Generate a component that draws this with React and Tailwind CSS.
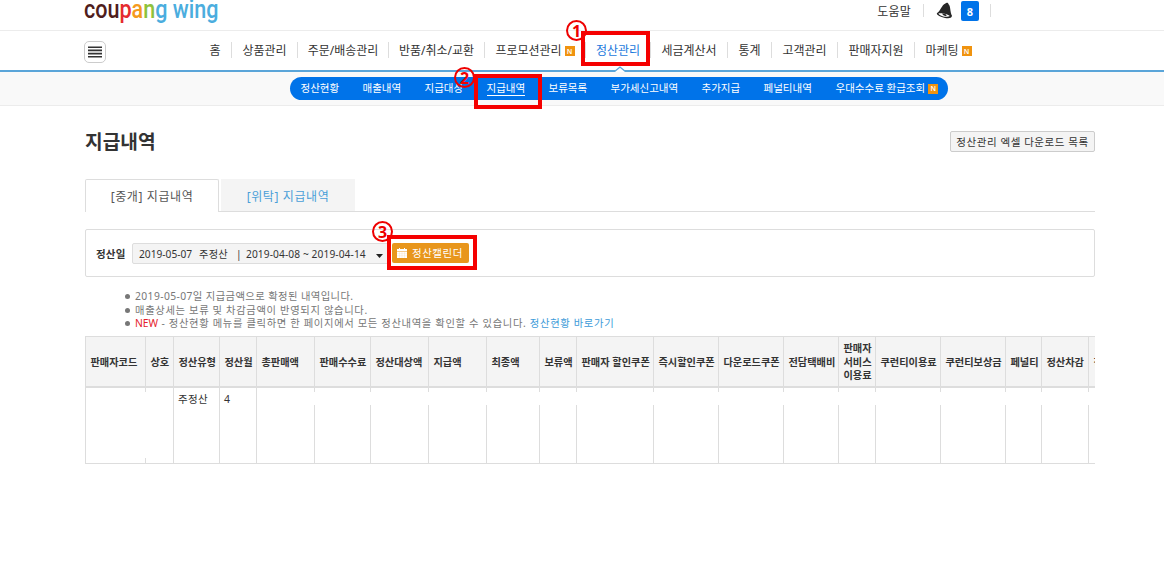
const FONT = "font-['Noto_Sans','Noto_Sans_CJK_KR',sans-serif]"

const menu = [
  { label: '홈', w: 'w-[33px]' },
  { label: '상품관리', w: 'w-[66px]' },
  { label: '주문/배송관리', w: 'w-[91px]' },
  { label: '반품/취소/교환', w: 'w-[96px]' },
  { label: '프로모션관리', w: 'w-[101px]', isNew: true },
  { label: '정산관리', w: 'w-[65px]', active: true },
  { label: '세금계산서', w: 'w-[77px]' },
  { label: '통계', w: 'w-[44px]' },
  { label: '고객관리', w: 'w-[66px]' },
  { label: '판매자지원', w: 'w-[77px]' },
  { label: '마케팅', w: 'w-[67px]', isNew: true, last: true },
]

const subMenu = [
  { label: '정산현황', w: 'w-[62px]' },
  { label: '매출내역', w: 'w-[62px]' },
  { label: '지급대상', w: 'w-[62px]' },
  { label: '지급내역', w: 'w-[62px]', active: true },
  { label: '보류목록', w: 'w-[62px]' },
  { label: '부가세신고내역', w: 'w-[91px]' },
  { label: '추가지급', w: 'w-[62px]' },
  { label: '페널티내역', w: 'w-[72px]' },
  { label: '우대수수료 환급조회', w: 'w-[110px]', isNew: true },
]

// line: 'full' = unbroken divider, 'cut' = gap near the top, 'tall' = only the ends are left
const columns = [
  { label: '판매자코드', w: 'w-[60px]', line: 'tall' },
  { label: '상호', w: 'w-[28px]', line: 'full' },
  { label: '정산유형', w: 'w-[46px]', line: 'full', value: '주정산' },
  { label: '정산월', w: 'w-[37px]', line: 'full', value: '4' },
  { label: '총판매액', w: 'w-[58px]', line: 'cut' },
  { label: '판매수수료', w: 'w-[56px]', line: 'cut' },
  { label: '정산대상액', w: 'w-[58px]', line: 'cut' },
  { label: '지급액', w: 'w-[58px]', line: 'cut' },
  { label: '최종액', w: 'w-[53px]', line: 'cut' },
  { label: '보류액', w: 'w-[37px]', line: 'cut' },
  { label: '판매자 할인쿠폰', w: 'w-[77px]', line: 'cut' },
  { label: '즉시할인쿠폰', w: 'w-[65px]', line: 'cut' },
  { label: '다운로드쿠폰', w: 'w-[65px]', line: 'cut' },
  { label: '전담택배비', w: 'w-[55px]', line: 'cut' },
  { label: '판매자\n서비스\n이용료', w: 'w-[37px]', line: 'cut' },
  { label: '쿠런티이용료', w: 'w-[65px]', line: 'cut' },
  { label: '쿠런티보상금', w: 'w-[65px]', line: 'cut' },
  { label: '페널티', w: 'w-[36px]', line: 'cut' },
  { label: '정산차감', w: 'w-[47px]', line: 'cut' },
  { label: '정산', w: 'w-[40px]', line: 'cut' },
]

function NewBadge() {
  return (
    <span className="flex h-[10px] w-[10px] shrink-0 items-center justify-center bg-[#f0930f] text-[7px] leading-none font-semibold text-white">
      N
    </span>
  )
}

function Logo() {
  return (
    <svg className="block h-[30px] w-[140px]" viewBox="0 0 140 30">
      <text
        x="0"
        y="17.8"
        textLength="134.5"
        lengthAdjust="spacingAndGlyphs"
        fontFamily="Roboto, sans-serif"
        fontSize="25"
        fontWeight="500"
      >
        <tspan fill="#4f1d1c">cou</tspan>
        <tspan fill="#e52b2f">p</tspan>
        <tspan fill="#f59a1d">a</tspan>
        <tspan fill="#8fc23c">n</tspan>
        <tspan fill="#4badde">g wing</tspan>
      </text>
    </svg>
  )
}

function Bell() {
  return (
    <svg className="h-[17px] w-[17px]" viewBox="0 0 17 17">
      <path
        d="M9.4 1.4 C10.3 .2 12.3 .5 12.4 2 C14.8 4 13.8 9.5 16 13.8 C15.6 16.4 12.4 16.6 9 15.9 C4.5 15 .8 13.1 .8 11.2 C4.8 8.7 5.5 3 9.4 1.4Z"
        fill="#262626"
      />
      <path d="M2.4 11.4 C5 10.5 12 12 13.8 14.1 C11.5 15.9 4.2 14.2 2.4 11.4Z" fill="#fff" />
      <path d="M6.2 11.5 C9 11.4 10.8 12.5 10.6 13.7 C9.4 14.6 6.6 13.6 6.2 11.5Z" fill="#262626" />
    </svg>
  )
}

function Header() {
  return (
    <header className="h-[31px] border-b border-[#ececec]">
      <div className="ml-[84px] flex w-[1010px] items-start">
        <Logo />
        <div className="mr-[103px] ml-auto flex h-[21px] items-center text-[12px] leading-[14px] text-[#333]">
          <span className="mt-[2px] tracking-[0.2px]">도움말</span>
          <span className="ml-[12px] h-[13px] w-px bg-[#ddd]" />
          <span className="ml-[12px]"><Bell /></span>
          <span className="ml-[8px] flex h-[20px] w-[18px] items-center justify-center rounded-[2px] bg-[#0073e9] pt-[3px] text-[11px] font-bold text-white">
            8
          </span>
          <span className="ml-[11px] h-[13px] w-px bg-[#ddd]" />
        </div>
      </div>
    </header>
  )
}

function MainMenu() {
  return (
    <nav className="flex h-[39px] pl-[84px] text-[12px] text-[#333]">
      <button type="button" className="mt-[10px] flex h-[22px] w-[22px] items-center justify-center rounded-[5px] border border-[#ccc]">
        <svg className="h-[12px] w-[14px]" viewBox="0 0 14 12">
          <path d="M0 1.2H14M0 4.4H14M0 7.6H14M0 10.8H14" stroke="#333" strokeWidth="1.6" />
        </svg>
      </button>
      <ul className="mt-[11px] ml-[93px] flex h-[16px]">
        {menu.map((item) => (
          <li
            key={item.label}
            className={`flex items-center justify-center gap-[3px] pt-[2px] leading-[16px] whitespace-nowrap ${item.w} ${item.last ? '' : 'border-r border-[#ddd]'} ${item.active ? 'text-[#1a78dc]' : ''}`}
          >
            {item.label}
            {item.isNew && <NewBadge />}
          </li>
        ))}
      </ul>
    </nav>
  )
}

function SubMenu() {
  return (
    <div className="relative h-[36px] border-t-2 border-b border-t-[#5aa5d9] border-b-[#ececec] bg-[#f9f9f9]">
      <svg className="absolute -top-[6px] left-[613px] h-[6px] w-[14px]" viewBox="0 0 14 6">
        <path d="M1 6 L7 1 L13 6" fill="#fff" stroke="#5aa5d9" strokeWidth="1.3" />
      </svg>
      <ul className="mt-[5px] ml-[290px] flex h-[23px] w-[658px] items-center rounded-full bg-[#0073e9] pl-[10.5px] text-[10.5px] text-white">
        {subMenu.map((item) => (
          <li key={item.label} className={`flex shrink-0 items-center gap-[3px] leading-[13px] whitespace-nowrap ${item.w}`}>
            <span className={item.active ? 'border-b border-white' : ''}>{item.label}</span>
            {item.isNew && <NewBadge />}
          </li>
        ))}
      </ul>
    </div>
  )
}

function SearchBar() {
  return (
    <div className="mt-[17px] flex h-[48px] items-center rounded-[2px] border border-[#ddd] pl-[10px] text-[10.5px]">
      <b className="w-[36px] pt-[4px] tracking-[0.2px] text-[#333]">정산일</b>
      <div className="flex h-[21px] w-[257px] items-center rounded-[2px] border border-[#ddd] bg-[#f4f4f4] pl-[6px] text-[10.2px] whitespace-pre text-[#333]">
        <span className="w-[60px] pt-[4px]">2019-05-07</span>
        <span className="w-[37px] pt-[4px] tracking-[0.3px]">주정산</span>
        <span className="w-[10px] pt-[3px]">|</span>
        <span className="w-[130px] pt-[4px] tracking-[0.1px]">2019-04-08 ~ 2019-04-14</span>
        <svg className="mt-[5px] h-[4px] w-[7px]" viewBox="0 0 7 4">
          <path d="M0 0H7L3.5 4Z" fill="#222" />
        </svg>
      </div>
      <button type="button" className="ml-[3px] flex h-[20px] w-[77px] items-center gap-[5px] rounded-[2px] bg-[#e8961c] pl-[5px] tracking-[0.5px] text-white">
        <svg className="h-[10px] w-[10px] shrink-0" viewBox="0 0 10 10">
          <path d="M0 1H2V0H3V1H7V0H8V1H10V3H0Z M0 3.5H10V10H0Z" fill="#fff" />
          <path d="M0 5.7H10M0 7.8H10M2.5 4V10M5 4V10M7.5 4V10" stroke="#e8961c" strokeWidth=".12" />
        </svg>
        <span className="pt-[2px] whitespace-nowrap">정산캘린더</span>
      </button>
    </div>
  )
}

function Notes() {
  return (
    <ul className="mt-[13px] ml-[40px] text-[10.3px] leading-[13.5px] tracking-[0.66px] text-[#777]">
      <li className="flex items-center gap-[5px]">
        <span className="h-[5px] w-[5px] rounded-full bg-[#777]" />
        <span className="tracking-[0.41px]">2019-05-07일 지급금액으로 확정된 내역입니다.</span>
      </li>
      <li className="flex items-center gap-[5px]">
        <span className="h-[5px] w-[5px] rounded-full bg-[#777]" />
        <span>매출상세는 보류 및 차감금액이 반영되지 않습니다.</span>
      </li>
      <li className="flex items-center gap-[5px]">
        <span className="h-[5px] w-[5px] rounded-full bg-[#777]" />
        <span>
          <span className="tracking-normal text-[#e5202b]">NEW</span> - 정산현황 메뉴를 클릭하면 한 페이지에서 모든 정산내역을 확인할 수 있습니다.{' '}
          <a className="text-[#3d9bd9]">정산현황 바로가기</a>
        </span>
      </li>
    </ul>
  )
}

function Divider({ line }) {
  if (line === 'full') return <span className="w-px bg-[#ddd]" />
  return (
    <span className="flex w-px flex-col justify-between">
      <span className="h-[4px] bg-[#ddd]" />
      <span className={line === 'cut' ? 'h-[58px] bg-[#ddd]' : 'h-[5px] bg-[#ddd]'} />
    </span>
  )
}

function PaymentTable() {
  return (
    <div className="mt-[5px] w-[1010px] overflow-hidden border-y border-l border-[#ddd]">
      <div className="flex h-[51px] w-max border-b-2 border-[#ddd] bg-[#f4f4f4]">
        {columns.map((col) => (
          <div
            key={col.label}
            className={`flex shrink-0 items-center border-r border-[#ddd] pt-[3px] pl-[4.5px] text-[10.2px] leading-[13.5px] font-bold whitespace-pre text-[#333] ${col.w}`}
          >
            {col.label}
          </div>
        ))}
      </div>
      <div className="flex h-[75px] w-max">
        {columns.map((col) => (
          <div key={col.label} className={`flex shrink-0 justify-between ${col.w}`}>
            <span className="pt-[4px] pl-[4px] text-[10.5px] leading-[14px] tracking-[0.3px] text-[#333]">{col.value}</span>
            <Divider line={col.line} />
          </div>
        ))}
      </div>
    </div>
  )
}

function Marker({ n, circle, box }) {
  return (
    <>
      <span className={`absolute flex h-[21px] w-[21px] items-center justify-center rounded-full border-2 border-[#ee0000] text-[16px] leading-none font-bold text-[#ee0000] ${circle}`}>
        {n}
      </span>
      <span className={`absolute border-4 border-[#f50000] ${box}`} />
    </>
  )
}

export default function App() {
  return (
    <div className={`relative h-[578px] w-[1164px] overflow-hidden bg-white ${FONT}`}>
      <Header />
      <MainMenu />
      <SubMenu />
      <main className="ml-[85px] w-[1010px]">
        <div className="flex h-[73px] items-center justify-between">
          <h1 className="-mt-[2px] text-[19.2px] leading-[24px] font-bold text-[#333]">지급내역</h1>
          <button type="button" className="-mt-[2px] h-[21px] w-[145px] rounded-[2px] border border-[#ccc] bg-[#f4f4f4] text-[10.5px] leading-[20px] tracking-[0.55px] whitespace-nowrap text-[#333]">
            정산관리 엑셀 다운로드 목록
          </button>
        </div>
        <div className="flex h-[33px] border-b border-[#ddd] text-[12px] tracking-[0.6px]">
          <div className="flex h-[33px] w-[134px] items-center justify-center rounded-t-[2px] border border-b-0 border-[#ddd] bg-white pt-px text-[#555]">
            [중개] 지급내역
          </div>
          <div className="ml-[2px] flex h-[32px] w-[134px] items-center justify-center bg-[#f4f4f4] pt-[3px] text-[#4a9fd8]">
            [위탁] 지급내역
          </div>
        </div>
        <SearchBar />
        <Notes />
        <PaymentTable />
      </main>
      <Marker n="1" circle="left-[566px] top-[20px]" box="left-[581px] top-[31px] h-[35px] w-[69px]" />
      <Marker n="2" circle="left-[454px] top-[67px]" box="left-[474px] top-[74px] h-[35px] w-[68px]" />
      <Marker n="3" circle="left-[372px] top-[221px]" box="left-[387px] top-[235px] h-[35px] w-[90px]" />
    </div>
  )
}
